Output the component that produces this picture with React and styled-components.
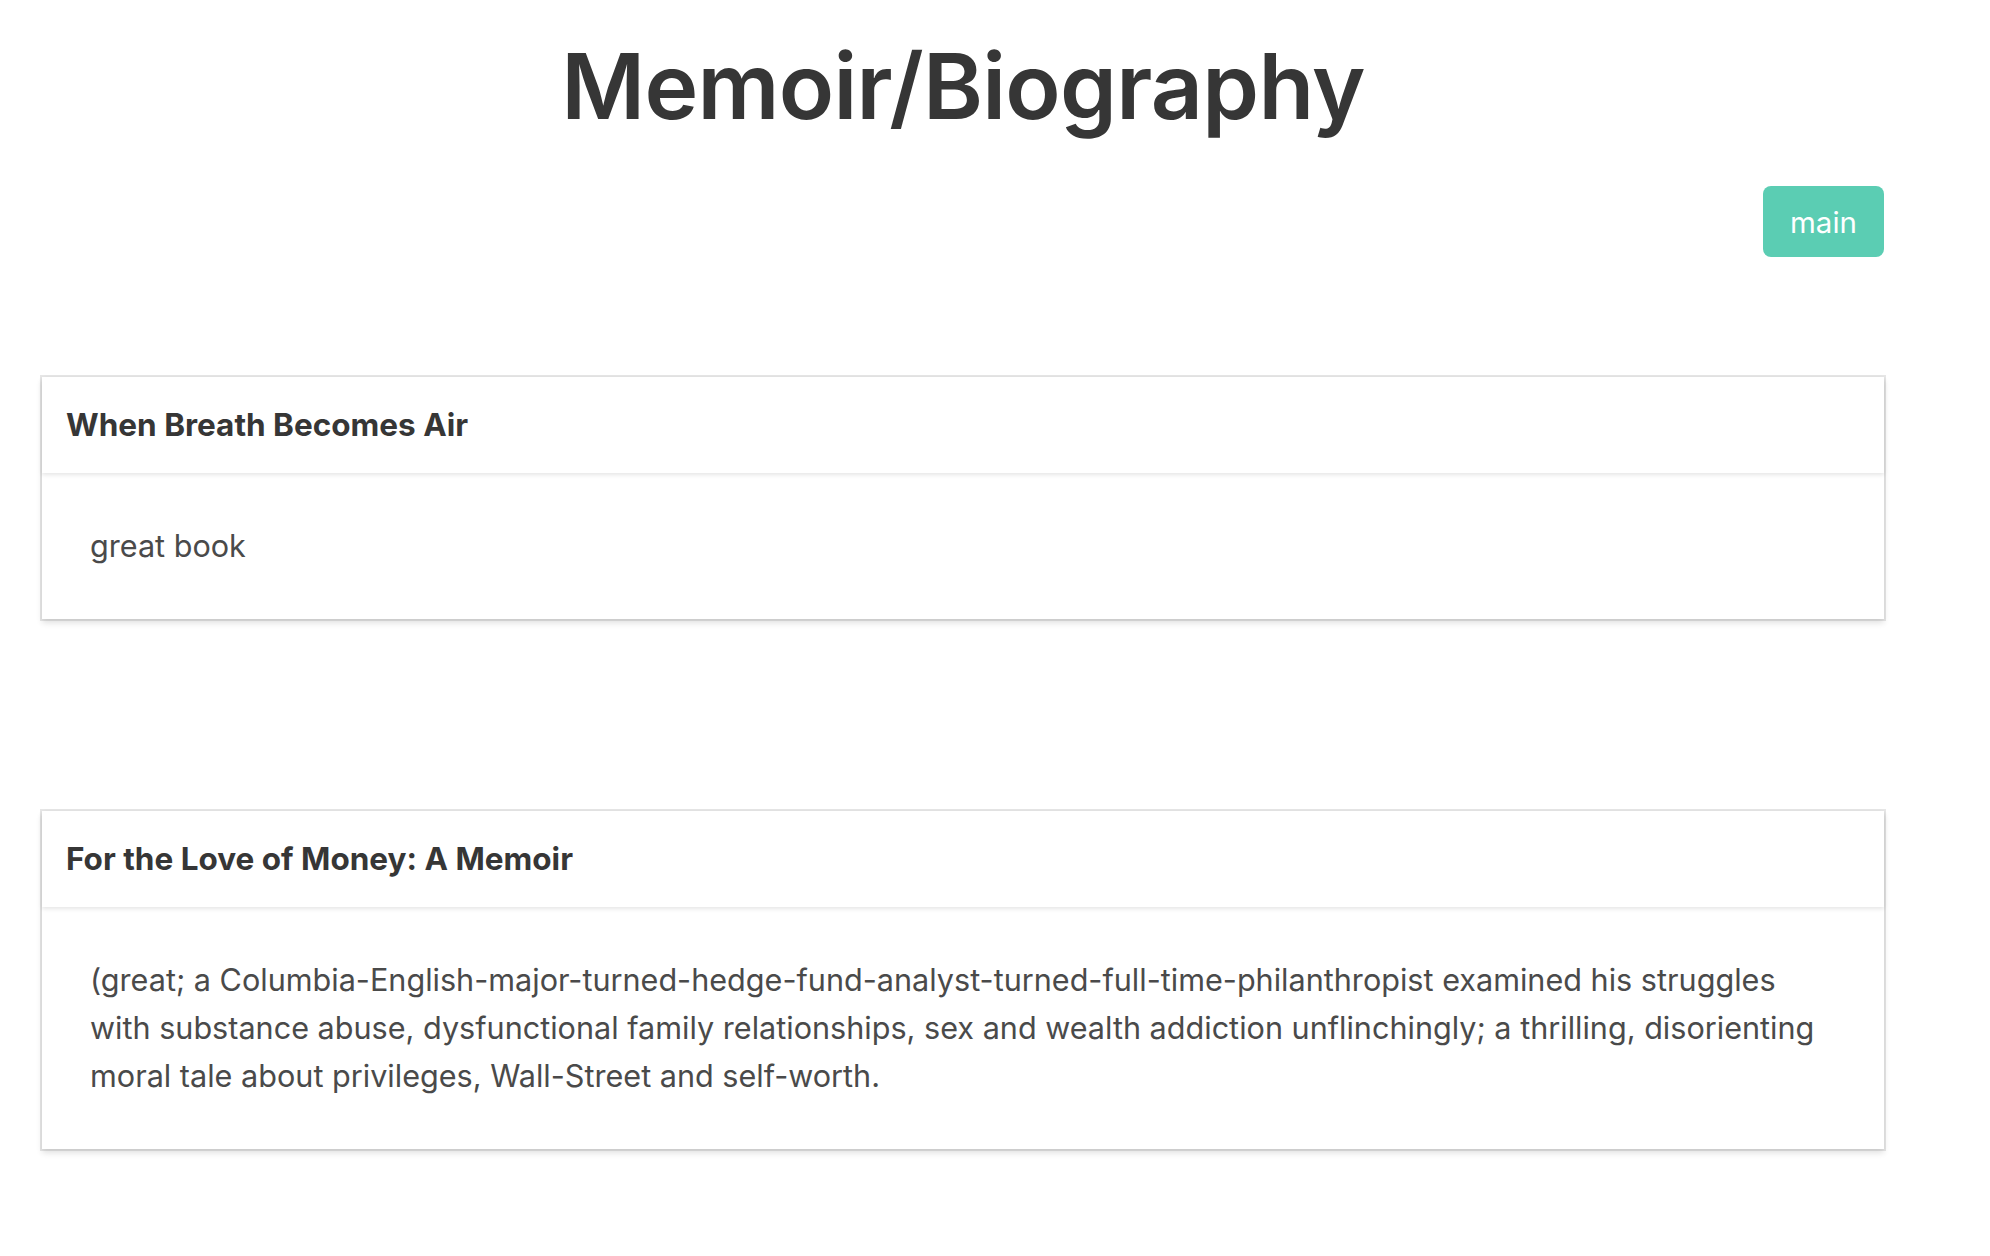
import React from "react"
import styled, { createGlobalStyle } from "styled-components"

const GlobalStyle = createGlobalStyle`
  html, body {
    margin: 0;
    padding: 0;
    background: #ffffff;
  }
  body {
    font-family: Inter, "Noto Sans", sans-serif;
    color: #4a4a4a;
  }
`

const Page = styled.div`
  padding: 35px 106px 80px 42px;
`

const Title = styled.h1`
  margin: 0;
  text-align: center;
  font-family: Inter, "Liberation Sans", sans-serif;
  font-size: 91px;
  font-weight: 600;
  line-height: 1.125;
  letter-spacing: -0.7px;
  color: #363636;
`

const Toolbar = styled.div`
  display: flex;
  justify-content: flex-end;
  margin-top: 49px;
`

const Button = styled.button`
  height: 71px;
  padding: 0 27px;
  border: none;
  border-radius: 8px;
  background: #5bcdb3;
  color: #ffffff;
  font-family: Inter, sans-serif;
  font-size: 29.5px;
  font-weight: 400;
  cursor: pointer;
`

const CardList = styled.div`
  display: flex;
  flex-direction: column;
  gap: 192px;
  margin-top: 120px;
`

const Card = styled.section`
  background: #ffffff;
  box-shadow: 0 4px 6px rgba(10, 10, 10, 0.12), 0 0 0 2px rgba(10, 10, 10, 0.1);
`

const CardHeader = styled.header`
  display: flex;
  box-shadow: 0 2px 4px rgba(10, 10, 10, 0.1);
`

const CardTitle = styled.p`
  margin: 0;
  padding: 24px;
  font-size: 31.5px;
  font-weight: 700;
  line-height: 48px;
  color: #363636;
`

const CardContent = styled.div`
  padding: 49px 48px 49px;
  font-size: 30.6px;
  line-height: 48px;
  color: #4a4a4a;
`

const books = [
  { title: "When Breath Becomes Air", review: "great book" },
  {
    title: "For the Love of Money: A Memoir",
    review:
      "(great; a Columbia-English-major-turned-hedge-fund-analyst-turned-full-time-philanthropist examined his struggles with substance abuse, dysfunctional family relationships, sex and wealth addiction unflinchingly; a thrilling, disorienting moral tale about privileges, Wall-Street and self-worth.",
  },
]

function App() {
  return (
    <Page>
      <GlobalStyle />
      <Title>Memoir/Biography</Title>
      <Toolbar>
        <Button type="button">main</Button>
      </Toolbar>
      <CardList>
        {books.map((book) => (
          <Card key={book.title}>
            <CardHeader>
              <CardTitle>{book.title}</CardTitle>
            </CardHeader>
            <CardContent>{book.review}</CardContent>
          </Card>
        ))}
      </CardList>
    </Page>
  )
}

export default App
